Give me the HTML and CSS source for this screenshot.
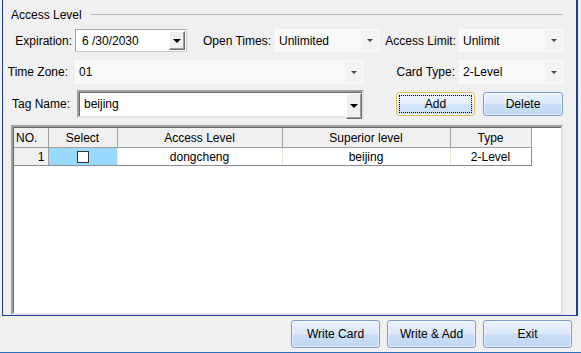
FILE: index.html
```html
<!DOCTYPE html>
<html lang="en">
<head>
    <meta charset="UTF-8">
    <title>Access Level</title>
    <link rel="stylesheet" href="styles.css">
</head>
<body>
    <div class="panel">
        <div class="group-title">
            <span>Access Level</span>
            <div class="group-line"></div>
        </div>

        <div class="row row-1">
            <label class="lbl lbl-exp">Expiration:</label>
            <div class="date-box">
                <span class="value">6 /30/2030</span>
                <span class="drop-btn"><i class="tri"></i></span>
            </div>
            <label class="lbl lbl-open">Open Times:</label>
            <div class="flat-combo w104">
                <span class="value">Unlimited</span>
                <span class="flat-arrow"><i class="tri small"></i></span>
            </div>
            <label class="lbl lbl-limit">Access Limit:</label>
            <div class="flat-combo w104">
                <span class="value">Unlimit</span>
                <span class="flat-arrow"><i class="tri small"></i></span>
            </div>
        </div>

        <div class="row row-2">
            <label class="lbl lbl-zone">Time Zone:</label>
            <div class="flat-combo w288">
                <span class="value">01</span>
                <span class="flat-arrow"><i class="tri small"></i></span>
            </div>
            <label class="lbl lbl-card">Card Type:</label>
            <div class="flat-combo w104">
                <span class="value">2-Level</span>
                <span class="flat-arrow"><i class="tri small"></i></span>
            </div>
        </div>

        <div class="row row-3">
            <label class="lbl lbl-tag">Tag Name:</label>
            <div class="edit-combo">
                <span class="value">beijing</span>
                <span class="drop-btn tall"><i class="tri"></i></span>
            </div>
            <button class="btn btn-add"><span class="focus">Add</span></button>
            <button class="btn btn-delete">Delete</button>
        </div>

        <div class="grid">
            <table class="levels">
                <colgroup>
                    <col class="c-no">
                    <col class="c-sel">
                    <col class="c-level">
                    <col class="c-sup">
                    <col class="c-type">
                </colgroup>
                <thead>
                    <tr>
                        <th class="h-no">NO.</th>
                        <th>Select</th>
                        <th>Access Level</th>
                        <th>Superior level</th>
                        <th>Type</th>
                    </tr>
                </thead>
                <tbody>
                    <tr>
                        <td class="d-no">1</td>
                        <td class="d-sel"><span class="check"></span></td>
                        <td>dongcheng</td>
                        <td>beijing</td>
                        <td>2-Level</td>
                    </tr>
                </tbody>
            </table>
        </div>
    </div>

    <div class="actions">
        <button class="btn btn-wide">Write Card</button>
        <button class="btn btn-wide">Write &amp; Add</button>
        <button class="btn btn-wide">Exit</button>
    </div>
    <div class="status-line"></div>
</body>
</html>
```

FILE: styles.css
```css
body {
    margin: 0;
    width: 581px;
    height: 353px;
    background-color: #f0f0f0;
    font-family: "Liberation Sans", Arial, sans-serif;
    font-size: 12px;
    color: #000;
    overflow: hidden;
}
.panel {
    margin-left: 2px;
    width: 576px;
    height: 316px;
    box-sizing: border-box;
    border-left: 1px solid #1c3e9c;
    border-right: 2px solid #1c3e9c;
    border-bottom: 1px solid #1c3e9c;
    display: flex;
    flex-direction: column;
    overflow: hidden;
}
.group-title {
    height: 29px;
    display: flex;
    align-items: flex-start;
    padding-left: 8px;
}
.group-title span {
    margin-top: 8px;
    line-height: 14px;
}
.group-line {
    flex: 1;
    height: 0;
    margin-top: 14px;
    margin-left: 9px;
    margin-right: 13px;
    border-top: 1px solid #b9b9b9;
}

/* form rows */
.row {
    display: flex;
    align-items: center;
}
.row-1 {
    height: 23px;
}
.row-2 {
    height: 24px;
    margin-top: 8px;
}
.row-3 {
    height: 28px;
    margin-top: 6px;
}
.lbl {
    box-sizing: border-box;
    text-align: right;
    white-space: nowrap;
}
.lbl-exp { width: 72px; padding-right: 3px; }
.lbl-open { width: 88px; padding-right: 4px; }
.lbl-limit { width: 80px; padding-right: 3px; }
.lbl-zone { width: 72px; padding-right: 7px; }
.lbl-card { width: 96px; padding-right: 4px; }
.lbl-tag { width: 74px; padding-right: 7px; }

.value {
    flex: 1;
    white-space: nowrap;
}
.tri {
    display: block;
    width: 0;
    height: 0;
    border-left: 4px solid transparent;
    border-right: 4px solid transparent;
    border-top: 4px solid #000;
}
.tri.small {
    border-left-width: 3px;
    border-right-width: 3px;
    border-top: 3px solid #444;
}

/* date picker */
.date-box {
    width: 112px;
    height: 23px;
    box-sizing: border-box;
    background: #fff;
    border: 1px solid #c9c9c9;
    border-top-color: #a5a5a5;
    border-left-color: #a5a5a5;
    display: flex;
    align-items: center;
    padding: 1px 1px 1px 6px;
}
.drop-btn {
    width: 16px;
    height: 19px;
    box-sizing: border-box;
    background: #f0f0f0;
    border: 1px solid;
    border-color: #fff #696969 #696969 #fff;
    box-shadow: inset -1px -1px 0 #a0a0a0;
    display: flex;
    align-items: center;
    justify-content: center;
}
.drop-btn.tall {
    height: 26px;
    margin-top: 1px;
}

/* flat combos */
.flat-combo {
    height: 23px;
    box-sizing: border-box;
    background: #f9f9f9;
    border: 1px solid #fcfcfc;
    display: flex;
    align-items: center;
    padding-left: 3px;
}
.row-2 .flat-combo {
    height: 24px;
}
.w104 { width: 104px; }
.w288 { width: 288px; }
.flat-arrow {
    width: 17px;
    align-self: stretch;
    background: #f3f3f3;
    display: flex;
    align-items: center;
    justify-content: center;
}

/* edit combo */
.edit-combo {
    width: 287px;
    height: 28px;
    box-sizing: border-box;
    background: #fff;
    border: 2px solid;
    border-color: #a0a0a0 #e3e3e3 #e3e3e3 #a0a0a0;
    box-shadow: inset 1px 1px 0 #696969;
    display: flex;
    align-items: flex-start;
    padding-left: 5px;
}
.edit-combo .value {
    line-height: 24px;
}

/* buttons */
.btn {
    font-family: "Liberation Sans", Arial, sans-serif;
    font-size: 12px;
    color: #000;
    height: 24px;
    box-sizing: border-box;
    border: 1px solid #7c9ccc;
    border-radius: 3px;
    background: linear-gradient(#eaf3fd 0%, #dce9f9 48%, #c9ddf5 52%, #c1d8f3 100%);
    box-shadow: inset 0 0 0 1px rgba(255, 255, 255, 0.6);
    padding: 0;
}
.btn-add {
    margin-left: 32px;
    width: 79px;
    border-color: #e3c063;
    padding: 2px;
    background: linear-gradient(#f0f6fd 0%, #e4eefa 48%, #d3e4f7 52%, #cde0f6 100%);
}
.btn-add .focus {
    display: block;
    height: 18px;
    line-height: 17px;
    box-sizing: border-box;
    border: 1px dotted #000;
}
.btn-delete {
    margin-left: 8px;
    width: 80px;
}

/* grid */
.grid {
    flex: 1;
    margin-top: 7px;
    margin-left: 8px;
    width: 552px;
    box-sizing: border-box;
    background: #fff;
    border: 2px solid;
    border-color: #a0a0a0 #e3e3e3 #e3e3e3 #a0a0a0;
    box-shadow: inset 1px 1px 0 #696969;
    padding: 1px 0 0 1px;
}
.levels {
    border-collapse: collapse;
    table-layout: fixed;
    width: 517px;
}
.levels col.c-no { width: 34px; }
.levels col.c-sel { width: 69px; }
.levels col.c-level { width: 165px; }
.levels col.c-sup { width: 168px; }
.levels col.c-type { width: 81px; }
.levels th {
    height: 19px;
    padding: 0;
    font-weight: normal;
    background: #f0f0f0;
    border-right: 1px solid #a0a0a0;
    border-bottom: 1px solid #a0a0a0;
    text-align: center;
}
.levels th.h-no {
    text-align: left;
    padding-left: 2px;
}
.levels td {
    height: 17px;
    padding: 0;
    text-align: center;
    border-right: 1px solid #efe8d4;
    border-bottom: 1px solid #8c8c8c;
}
.levels td.d-no {
    background: #f0f0f0;
    text-align: right;
    padding-right: 3px;
    border-right: 1px solid #a0a0a0;
}
.levels td.d-sel {
    background: #99d9fd;
}
.levels td:last-child {
    border-right: 1px solid #8c8c8c;
}
.check {
    display: inline-block;
    width: 12px;
    height: 12px;
    box-sizing: border-box;
    background: #fff;
    border: 1px solid #333;
    vertical-align: middle;
}

/* bottom bar */
.actions {
    display: flex;
    gap: 7px;
    padding-left: 291px;
    margin-top: 4px;
}
.btn-wide {
    width: 89px;
    height: 28px;
}
.status-line {
    margin-top: 4px;
    height: 1px;
    background: #2a6fb8;
}
```
